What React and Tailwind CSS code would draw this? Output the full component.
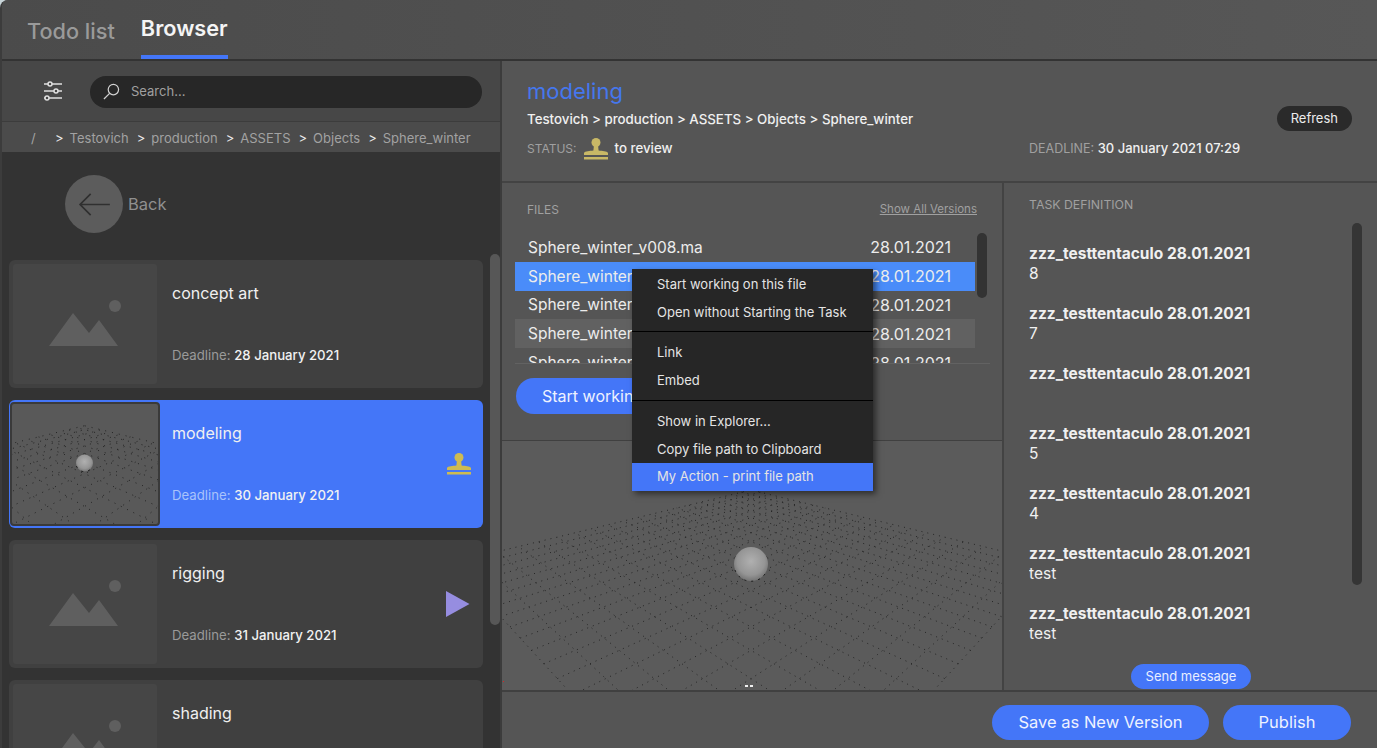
import { useMemo } from 'react';

const FONT = 'font-[Inter,"Liberation_Sans",sans-serif]';

const crumbs = ['Testovich', 'production', 'ASSETS', 'Objects', 'Sphere_winter'];

const tasks = [
  { name: 'concept art', deadline: '28 January 2021' },
  { name: 'modeling', deadline: '30 January 2021', selected: true, status: 'review' },
  { name: 'rigging', deadline: '31 January 2021', status: 'play' },
  { name: 'shading', deadline: '2 February 2021' },
];

const messages = ['8', '7', '\u00a0', '5', '4', 'test', 'test'];

// perspective of the floor grid in the viewport
function project(u, v) {
  const depth = 3.15 + u + v;
  return [752 + (472 * (u - v)) / depth, 375 + 592 / depth];
}

function gridLines(count) {
  const lines = [];
  for (let i = 0; i <= count; i++) {
    const t = (i / count) * 2 - 1;
    lines.push([project(t, -1), project(t, 1)]);
    lines.push([project(-1, t), project(1, t)]);
  }
  return lines;
}

function Viewport({ viewBox, className, count, dash, marks }) {
  const lines = useMemo(() => gridLines(count), [count]);
  return (
    <svg viewBox={viewBox} preserveAspectRatio="xMidYMid slice" className={className}>
      <defs>
        <radialGradient id="ball" cx="50%" cy="42%" r="58%">
          <stop offset="0%" stopColor="#b0b0b0" />
          <stop offset="70%" stopColor="#959595" />
          <stop offset="100%" stopColor="#747474" />
        </radialGradient>
      </defs>
      {lines.map(([a, b], i) => (
        <line
          key={i}
          x1={a[0]}
          y1={a[1]}
          x2={b[0]}
          y2={b[1]}
          stroke="#1f1f1f"
          strokeWidth="0.900"
          strokeDasharray={dash}
          vectorEffect="non-scaling-stroke"
        />
      ))}
      <circle cx="752" cy="564" r="17" fill="url(#ball)" />
      <path
        d="M736 570a17 17 0 0 0 32 0"
        fill="none"
        stroke="#1a1a1a"
        strokeWidth="1"
        strokeDasharray="2 5"
        vectorEffect="non-scaling-stroke"
      />
      {marks && (
        <>
          <rect x="746" y="685" width="3" height="2" fill="#f0f0f0" />
          <rect x="751" y="685" width="3" height="2" fill="#f0f0f0" />
          <rect x="504" y="681" width="1" height="1" fill="#e02020" />
        </>
      )}
    </svg>
  );
}

function Stamp({ className, color }) {
  return (
    <svg viewBox="0 0 26 22" className={className} fill={color}>
      <circle cx="13" cy="4.5" r="4.5" />
      <path d="M11 7h4l.6 5.5c3.6.4 8.4.7 9.4 2.4V17H1v-2.100c1-1.700 5.800-2 9.400-2.400z" />
      <rect x="1" y="19" width="24" height="2.500" />
    </svg>
  );
}

function Placeholder() {
  return (
    <div className="w-[144px] h-[120px] rounded-[3px] bg-[#464646] flex items-center justify-center shrink-0">
      <svg viewBox="0 0 72 46" className="w-[72px] h-[46px] mt-[-3px]" fill="#5f5f5f">
        <circle cx="66" cy="6" r="6" />
        <path d="M0 46 24 13 40 33 50 20 69 46z" />
      </svg>
    </div>
  );
}

function TaskCard({ task }) {
  const bg = task.selected ? 'bg-[#4476f8]' : 'bg-[#404040]';
  return (
    <div className={`${bg} h-[128px] rounded-[6px] flex items-center relative shrink-0 pl-[4px]`}>
      {task.selected ? (
        <div className="w-[150px] h-[124px] ml-[-3px] rounded-[4px] border-2 border-[#3a3a3a] bg-[#595959] overflow-hidden shrink-0">
          <Viewport viewBox="608 444 290 244" count={12} dash="1 6" className="w-full h-full" />
        </div>
      ) : (
        <Placeholder />
      )}
      <div className={`flex-1 h-full flex flex-col pt-[24px] ${task.selected ? 'pl-[12px]' : 'pl-[15px]'}`}>
        <div className="text-[16px] leading-[18px] text-[#f0f0f0]">{task.name}</div>
        <div className="text-[13.200px] leading-[16px] mt-[45px] text-[#f2f2f2] font-medium">
          <span className={task.selected ? 'text-[#a9c3fb] font-normal' : 'text-[#9a9a9a] font-normal'}>Deadline: </span>
          {task.deadline}
        </div>
      </div>
      {task.status === 'review' && <Stamp color="#cdbb52" className="w-[26px] h-[22px] mr-[11px]" />}
      {task.status === 'play' && (
        <svg viewBox="0 0 24 26" className="w-[24px] h-[26px] mr-[13px]" fill="#968de0">
          <path d="M0 0 23.500 13 0 26z" />
        </svg>
      )}
    </div>
  );
}

function Sidebar() {
  return (
    <div className="w-[500px] shrink-0 flex flex-col border-r-2 border-[#3c3c3c] min-h-0">
      <div className="h-[61px] shrink-0 bg-[#474747] flex items-center pl-[41px] pr-[18px] pt-[1px] gap-[27px] border-b border-[#3c3c3c]">
        <svg viewBox="0 0 20 20" className="w-[20px] h-[20px] mt-[-1px] text-[#e0e0e0]" fill="none" stroke="currentColor">
          <path d="M1 3h18M1 10h18M1 17h18" strokeWidth="1.500" />
          <circle cx="7" cy="3" r="2" fill="#474747" strokeWidth="1.500" />
          <circle cx="13" cy="10" r="2" fill="#474747" strokeWidth="1.500" />
          <circle cx="4" cy="17" r="2" fill="#474747" strokeWidth="1.500" />
        </svg>
        <div className="flex-1 h-[32px] rounded-full bg-[#272727] flex items-center pl-[13px] gap-[11px]">
          <svg viewBox="0 0 18 18" className="w-[17px] h-[17px] text-[#d0d0d0]" fill="none" stroke="currentColor" strokeWidth="1.300">
            <circle cx="11" cy="7" r="5.500" />
            <path d="M7 11 1 17" />
          </svg>
          <span className="text-[13px] text-[#a0a0a0]">Search...</span>
        </div>
      </div>
      <div className="h-[30px] shrink-0 bg-[#4b4b4b] flex items-center pl-[29px] pt-[3px] text-[13px] text-[#a2a2a2]">
        <span className="w-[24px]">/</span>
        {crumbs.map((c) => (
          <span key={c} className="mr-[8px]">
            <span className="text-[#ececec] mr-[6px]">&gt;</span>
            {c}
          </span>
        ))}
      </div>
      <div className="flex-1 bg-[#333333] flex min-h-0 overflow-hidden">
        <div className="flex-1 flex flex-col pl-[7px] pr-[6px] min-w-0">
          <div className="h-[108px] shrink-0 flex items-center pl-[56px] pb-[4px]">
            <div className="w-[58px] h-[58px] rounded-full bg-[#5c5c5c] flex items-center justify-center">
              <svg viewBox="0 0 34 24" className="w-[33px] h-[23px]" fill="none" stroke="#303030" strokeWidth="1.800">
                <path d="M33 12H2M13 1 2 12l11 11" />
              </svg>
            </div>
            <span className="text-[16.500px] text-[#8f8f8f] ml-[5px]">Back</span>
          </div>
          <div className="flex flex-col gap-[12px]">
            {tasks.map((t) => (
              <TaskCard key={t.name} task={t} />
            ))}
          </div>
        </div>
        <div className="w-[11px] shrink-0 pt-[102px] flex justify-end">
          <div className="w-[10px] h-[371px] rounded-full bg-[#575757]" />
        </div>
      </div>
    </div>
  );
}

function FileRow({ tone }) {
  const bg = { on: 'bg-[#4a8cf9]', hover: 'bg-[#616161]' }[tone] || '';
  return (
    <div className={`${bg} h-[28.800px] shrink-0 flex items-center justify-between pl-[13px] pr-[24px] text-[#ececec]`}>
      <span className="text-[15.500px]">Sphere_winter_v008.ma</span>
      <span className="text-[16px]">28.01.2021</span>
    </div>
  );
}

function MenuItem({ children, active }) {
  return (
    <div className={`h-[27.500px] flex items-center pl-[25px] text-[13px] text-[#e4e4e4] ${active ? 'bg-[#4476f8]' : ''}`}>
      {children}
    </div>
  );
}

function ContextMenu() {
  return (
    <div className="absolute left-[630px] top-[269px] w-[241px] bg-[#262626] pt-[2px] shadow-[3px_3px_6px_rgba(0,0,0,0.5)]">
      <MenuItem>Start working on this file</MenuItem>
      <MenuItem>Open without Starting the Task</MenuItem>
      <div className="h-[1px] bg-black mt-[5px] mb-[7px]" />
      <MenuItem>Link</MenuItem>
      <MenuItem>Embed</MenuItem>
      <div className="h-[1px] bg-black mt-[6px] mb-[7px]" />
      <MenuItem>Show in Explorer...</MenuItem>
      <MenuItem>Copy file path to Clipboard</MenuItem>
      <MenuItem active>My Action - print file path</MenuItem>
    </div>
  );
}

function Details() {
  return (
    <div className="flex-1 flex flex-col min-w-0 bg-[#555555]">
      <div className="h-[122px] shrink-0 flex border-b-2 border-[#434343] pl-[25px] pr-[25px]">
        <div className="w-[502px] shrink-0 flex flex-col pt-[16px]">
          <div className="text-[22px] leading-[28px] text-[#4577ee]">modeling</div>
          <div className="text-[13.300px] leading-[16px] mt-[6px] text-[#f0f0f0] font-medium">
            Testovich &gt; production &gt; ASSETS &gt; Objects &gt; Sphere_winter
          </div>
          <div className="flex items-center mt-[9px] h-[26px]">
            <span className="text-[12px] text-[#a0a0a0]">STATUS:</span>
            <Stamp color="#c8b866" className="w-[26px] h-[22px] ml-[6px] mr-[6px]" />
            <span className="text-[13.300px] text-[#f0f0f0] font-medium">to review</span>
          </div>
        </div>
        <div className="flex-1 flex flex-col pt-[45px]">
          <div className="self-end h-[25px] px-[14px] rounded-full bg-[#2a2a2a] flex items-center text-[13px] text-[#ececec]">
            Refresh
          </div>
          <div className="mt-[8px] text-[13px] text-[#f0f0f0] font-medium">
            <span className="text-[12.500px] text-[#a0a0a0] font-normal">DEADLINE: </span>
            30 January 2021 07:29
          </div>
        </div>
      </div>
      <div className="flex-1 flex min-h-0">
        <div className="w-[500px] shrink-0 flex flex-col">
          <div className="h-[258px] shrink-0 border-b border-[#404040] flex flex-col pl-[13px] pr-[12px]">
            <div className="flex justify-between items-center h-[20px] mt-[17px] pl-[12px] pr-[13px]">
              <span className="text-[12px] text-[#a0a0a0]">FILES</span>
              <span className="text-[11.500px] text-[#a0a0a0] underline">Show All Versions</span>
            </div>
            <div className="flex mt-[13px] border-b border-[#626262] h-[131px]">
              <div className="w-[460px] flex flex-col overflow-hidden">
                <FileRow />
                <FileRow tone="on" />
                <FileRow />
                <FileRow tone="hover" />
                <FileRow />
              </div>
              <div className="w-[10px] h-[65px] rounded-full bg-[#333333] ml-[2px]" />
            </div>
            <div className="mt-[14px] ml-[1px] w-[300px] h-[36px] rounded-full bg-[#4476f8] flex items-center pl-[26px] text-[16px] text-[#eef2ff]">
              Start working
            </div>
          </div>
          <div className="flex-1 min-h-0 bg-[#5b5b5b] overflow-hidden">
            <Viewport viewBox="503 441 500 249" count={20} dash="1 5" marks className="w-full h-full" />
          </div>
        </div>
        <div className="flex-1 min-w-0 border-l-2 border-[#434343] flex flex-col pl-[25px] relative">
          <div className="text-[12.300px] text-[#a0a0a0] mt-[13px] h-[16px]">TASK DEFINITION</div>
          <div className="flex-1 flex min-h-0 mt-[11px] overflow-hidden">
            <div className="flex-1 flex flex-col gap-[20px] pt-[21px]">
              {messages.map((m, i) => (
                <div key={i} className="text-[15.500px] leading-[20px] text-[#f0f0f0]">
                  <div className="font-bold whitespace-nowrap">zzz_testtentaculo 28.01.2021</div>
                  <div>{m}</div>
                </div>
              ))}
            </div>
            <div className="w-[10px] h-[362px] rounded-full bg-[#353535] mr-[15px]" />
          </div>
          <div className="absolute left-[127px] top-[481px] h-[25px] w-[120px] rounded-full bg-[#4476f8] flex items-center justify-center text-[13px] text-[#e8eeff]">
            Send message
          </div>
        </div>
      </div>
      <div className="h-[58px] shrink-0 border-t-2 border-[#404040] flex items-center justify-end gap-[14px] pr-[26px] pt-[5px] text-[16.500px] text-[#eef2ff]">
        <div className="w-[217px] h-[35px] rounded-full bg-[#4476f8] flex items-center justify-center">Save as New Version</div>
        <div className="w-[128px] h-[35px] rounded-full bg-[#4476f8] flex items-center justify-center">Publish</div>
      </div>
    </div>
  );
}

export default function App() {
  return (
    <div className={`w-[1377px] h-[748px] bg-[#c8d4d8] overflow-hidden ${FONT}`}>
      <div className="relative w-full h-full rounded-tl-[8px] overflow-hidden bg-[#555555] border-l-2 border-[#3c3c3c] flex flex-col">
        <div className="h-[61px] shrink-0 bg-gradient-to-r from-[#4b4b4b] to-[#575757] border-b-2 border-[#333333] flex pl-[25px] gap-[26px]">
          <div className="text-[21.700px] text-[#9a9a9a] font-medium pt-[15px]">Todo list</div>
          <div className="h-[59px] border-b-[4px] border-[#4476f8] text-[21.700px] text-[#f4f4f4] font-semibold pt-[12px]">Browser</div>
        </div>
        <div className="flex-1 flex min-h-0">
          <Sidebar />
          <Details />
        </div>
        <ContextMenu />
      </div>
    </div>
  );
}
